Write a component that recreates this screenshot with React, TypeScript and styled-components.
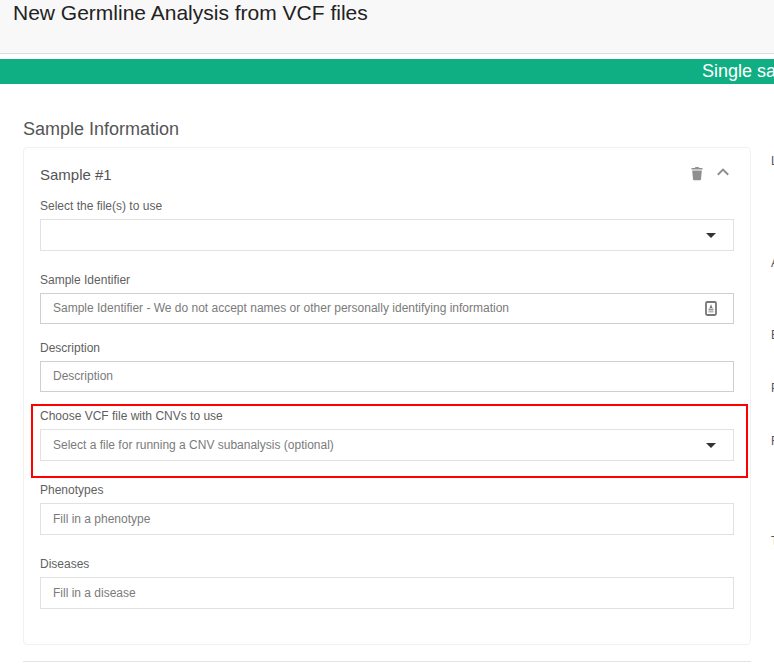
import React, { FC, ReactNode } from "react";
import styled, { createGlobalStyle } from "styled-components";

const GlobalStyle = createGlobalStyle`
  html, body {
    margin: 0;
    padding: 0;
    background: #fff;
    overflow: hidden;
    height: 666px;
  }
  * {
    box-sizing: border-box;
  }
  body {
    font-family: "Liberation Sans", Arial, sans-serif;
    color: #555;
  }
`;

const TrashIcon = () => (
  <svg width="16" height="16" viewBox="0 0 16 16" fill="#8f8f8f">
    <path d="M3.200 5.500h9.600l-.8 9c0 .5-.4.8-.9.8H4.900c-.5 0-.9-.3-.9-.8l-.8-9z" />
    <path d="M2.500 3h3.300L6.500 2h3l.7 1h3.300v1.400h-11z" />
  </svg>
);

const ChevronUpIcon = () => (
  <svg width="16" height="16" viewBox="0 0 16 16" fill="none" stroke="#8f8f8f" strokeWidth="2">
    <path d="M2.800 9.800L8 4.600l5.200 5.200" />
  </svg>
);

const IdIcon = () => (
  <svg width="12" height="15" viewBox="0 0 12 15">
    <rect x="1" y="1" width="10" height="13" rx="1.200" fill="#fff" stroke="#777" strokeWidth="1.800" />
    <path d="M6 3.200L7.500 7h-3z" fill="#777" />
    <rect x="3.500" y="7.500" width="5" height="2" fill="#999" />
    <rect x="3.500" y="10" width="5" height="1.500" fill="#b5b5b5" />
  </svg>
);

interface FieldProps {
  label: string;
  placeholder?: string;
  select?: boolean;
  icon?: ReactNode;
  dark?: boolean;
  gap: number;
}

const Field: FC<FieldProps> = ({ label, placeholder, select, icon, dark, gap }) => (
  <FieldWrap $gap={gap}>
    <FieldLabel>{label}</FieldLabel>
    <Control $dark={dark}>
      <Placeholder>{placeholder}</Placeholder>
      {select && <Caret />}
      {icon && <IconSlot>{icon}</IconSlot>}
    </Control>
  </FieldWrap>
);

const sideLetters = [
  { text: "L", top: 13 },
  { text: "A", top: 88 },
  { text: "E", top: 58 },
  { text: "P", top: 39 },
  { text: "F", top: 39 },
  { text: "T", top: 86 },
];

const App: FC = () => {
  return (
    <Page>
      <GlobalStyle />
      <Header>
        <Title>New Germline Analysis from VCF files</Title>
      </Header>
      <Banner>Single sample</Banner>
      <Content>
        <Main>
          <SectionTitle>Sample Information</SectionTitle>
          <Card>
            <CardHeader>
              <CardTitle>Sample #1</CardTitle>
              <CardActions>
                <TrashIcon />
                <ChevronUpIcon />
              </CardActions>
            </CardHeader>
            <Field label="Select the file(s) to use" select gap={0} />
            <Field
              label="Sample Identifier"
              placeholder="Sample Identifier - We do not accept names or other personally identifying information"
              icon={<IdIcon />}
              dark
              gap={22}
            />
            <Field label="Description" placeholder="Description" dark gap={17} />
            <Field
              label="Choose VCF file with CNVs to use"
              placeholder="Select a file for running a CNV subanalysis (optional)"
              select
              gap={17}
            />
            <Field label="Phenotypes" placeholder="Fill in a phenotype" gap={22} />
            <Field label="Diseases" placeholder="Fill in a disease" gap={22} />
            <Highlight />
          </Card>
          <Divider />
        </Main>
        <Side>
          {sideLetters.map((item) => (
            <SideLabel key={item.text} $top={item.top}>
              {item.text}
            </SideLabel>
          ))}
        </Side>
      </Content>
    </Page>
  );
};

export default App;

const Page = styled.div`
  width: 774px;
  height: 666px;
  overflow: hidden;
`;

const Header = styled.header`
  height: 54px;
  background: #f8f8f8;
  border-bottom: 1px solid #dcdcdc;
  padding: 0 13px;
`;

const Title = styled.h1`
  margin: 0;
  font-size: 21px;
  line-height: 26px;
  font-weight: 400;
  color: #222;
`;

const Banner = styled.div`
  margin-top: 5px;
  height: 25px;
  background: #0fae83;
  color: #fff;
  font-size: 18px;
  line-height: 24px;
  padding-left: 702px;
  white-space: nowrap;
  overflow: hidden;
`;

const Content = styled.div`
  display: flex;
  padding: 35px 0 0 23px;
`;

const Main = styled.div`
  width: 728px;
  flex-shrink: 0;
`;

const SectionTitle = styled.h2`
  margin: 0;
  font-size: 18px;
  line-height: 20px;
  font-weight: 400;
  color: #555;
`;

const Card = styled.section`
  position: relative;
  margin-top: 8px;
  height: 498px;
  padding: 0 16px;
  background: #fff;
  border: 1px solid #f1f1f1;
  border-radius: 4px;
`;

const CardHeader = styled.div`
  display: flex;
  align-items: center;
  justify-content: space-between;
  height: 49px;
  padding-top: 3px;
`;

const CardTitle = styled.h3`
  margin: 0;
  font-size: 15px;
  font-weight: 400;
  color: #555;
`;

const CardActions = styled.div`
  display: flex;
  align-items: center;
  gap: 10px;
  margin: -3px 3px 0 0;
`;

const FieldWrap = styled.div<{ $gap: number }>`
  margin-top: ${(props) => props.$gap}px;
`;

const FieldLabel = styled.label`
  display: block;
  font-size: 12px;
  line-height: 14px;
  margin: 2px 0 6px;
  color: #5f5f5f;
`;

const Control = styled.div<{ $dark?: boolean }>`
  display: flex;
  align-items: center;
  justify-content: space-between;
  height: ${(props) => (props.$dark ? 31 : 32)}px;
  padding: 0 15px ${(props) => (props.$dark ? 1 : 0)}px 12px;
  border: 1px solid ${(props) => (props.$dark ? "#cfcfcf" : "#e2e2e2")};
  background: #fff;
`;

const Placeholder = styled.span`
  font-size: 12px;
  color: #7b7b7b;
`;

const Caret = styled.span`
  width: 0;
  height: 0;
  margin-right: 2px;
  border-left: 5.5px solid transparent;
  border-right: 5.5px solid transparent;
  border-top: 5px solid #333;
`;

const IconSlot = styled.span`
  display: flex;
  margin-right: 1px;
`;

const Highlight = styled.div`
  position: absolute;
  left: 7px;
  top: 256px;
  width: 717px;
  height: 74px;
  border: 2px solid #f00;
  pointer-events: none;
`;

const Divider = styled.hr`
  margin: 16px 0 0;
  border: 0;
  border-top: 1px solid #e4e4e4;
`;

const Side = styled.aside`
  margin-left: 20px;
  padding-top: 22px;
  white-space: nowrap;
`;

const SideLabel = styled.div<{ $top: number }>`
  margin-top: ${(props) => props.$top}px;
  font-size: 12px;
  line-height: 14px;
  color: #555;
`;
